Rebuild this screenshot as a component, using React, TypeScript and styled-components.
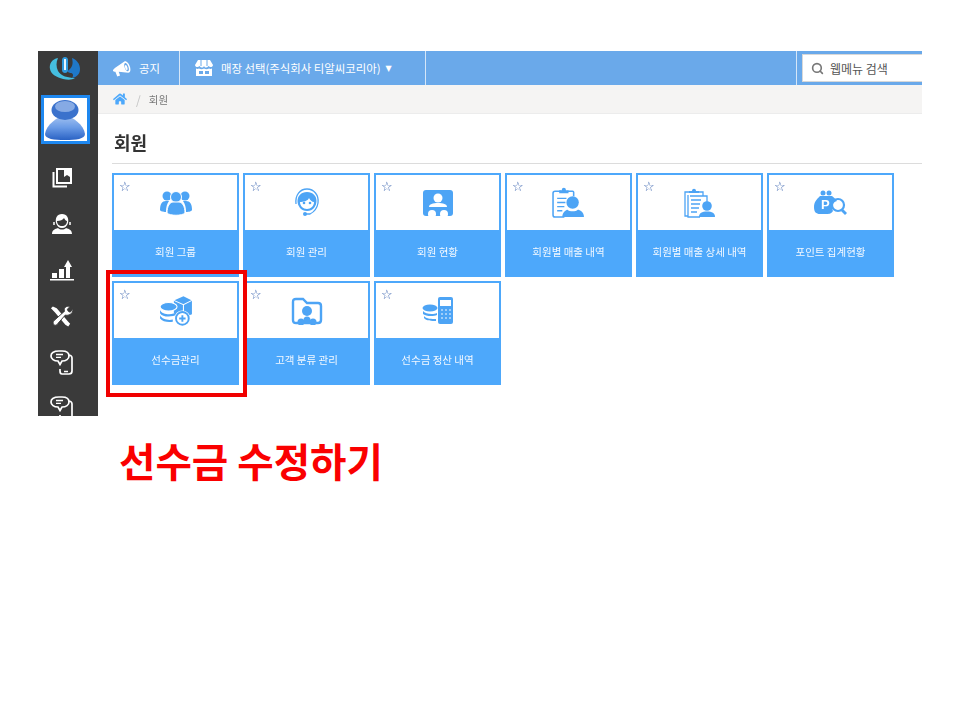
import React from "react";
import styled, { createGlobalStyle } from "styled-components";
import { FaHome } from "react-icons/fa";
import { FiSearch } from "react-icons/fi";

const Global = createGlobalStyle`
  html, body { margin: 0; padding: 0; background: #fff; }
  body { font-family: "Noto Sans CJK KR", "Noto Sans", sans-serif; }
`;

const Page = styled.div`
  position: relative;
  width: 960px;
  height: 720px;
  padding: 51px 38px 0;
  box-sizing: border-box;
  overflow: hidden;
`;
const Frame = styled.div`
  display: flex;
  width: 884px;
  height: 365px;
  overflow: hidden;
  filter: blur(0.3px);
`;
const Sidebar = styled.aside`
  flex: 0 0 60px;
  background: #3a3a3a;
  display: flex;
  flex-direction: column;
  align-items: center;
  overflow: hidden;
`;
const LogoBox = styled.div`
  flex: 0 0 34px;
  margin-right: 6px;
  display: flex;
  align-items: center;
  justify-content: center;
`;
const Avatar = styled.div`
  flex: 0 0 auto;
  margin-top: 10px;
  margin-right: 6px;
  width: 43px;
  height: 43px;
  border: 3px solid #1e88f0;
  background: #fff;
  display: flex;
  align-items: center;
  justify-content: center;
`;
const SideIcons = styled.div`
  flex: 0 0 auto;
  margin-top: 22px;
  margin-right: 12px;
  display: flex;
  flex-direction: column;
  align-items: center;
  gap: 22px;
  color: #fff;
`;
const SideIcon = styled.div`
  width: 24px;
  height: 24px;
  display: flex;
  align-items: center;
  justify-content: center;
`;
const Main = styled.main`
  flex: 1;
  min-width: 0;
  display: flex;
  flex-direction: column;
`;
const TopBar = styled.div`
  flex: 0 0 34px;
  background: #6aa9ea;
  display: flex;
  align-items: stretch;
  color: #fff;
  font-size: 11.4px;
  white-space: nowrap;
`;
const TopItem = styled.div<{ $w: number }>`
  width: ${(p) => p.$w}px;
  box-sizing: border-box;
  border-right: 1px solid #d5e6f8;
  display: flex;
  align-items: center;
  padding-left: 15px;
  gap: 8px;
`;
const Caret = styled.span`
  font-family: "DejaVu Sans", sans-serif;
  font-size: 8px;
  margin-left: -3px;
`;
const Spacer = styled.div`
  flex: 1;
`;
const SearchWrap = styled.div`
  width: 126px;
  box-sizing: border-box;
  border-left: 1px solid #d5e6f8;
  padding: 3px 0 3px 5px;
  display: flex;
`;
const SearchBox = styled.div`
  flex: 1;
  background: #fff;
  border: 1px solid #d8d8d8;
  border-right: 0;
  display: flex;
  align-items: center;
  padding-left: 8px;
  gap: 6px;
  color: #555;
  font-size: 12px;
`;
const Crumbs = styled.div`
  flex: 0 0 29px;
  box-sizing: border-box;
  background: #f5f4f3;
  border-bottom: 1px solid #ececec;
  display: flex;
  align-items: center;
  padding-left: 15px;
  font-size: 10.5px;
  color: #777;
`;
const Slash = styled.span`
  color: #c4c4c4;
  margin: 0 8px 0 9px;
  font-size: 12px;
`;
const Content = styled.div`
  padding: 0 0 0 14px;
`;
const Title = styled.h1`
  margin: 0;
  padding: 15px 0 0 2px;
  height: 34px;
  font-size: 18px;
  line-height: 26px;
  font-weight: 700;
  color: #333;
  border-bottom: 1px solid #dcdcdc;
`;
const Grid = styled.div`
  margin-top: 9px;
  display: grid;
  grid-template-columns: repeat(6, 127px);
  grid-auto-rows: 104px;
  gap: 4px;
`;
const Card = styled.div`
  border: 2px solid #4da8fb;
  background: #4da8fb;
  display: flex;
  flex-direction: column;
  box-sizing: border-box;
`;
const CardTop = styled.div`
  position: relative;
  height: 55px;
  background: #fff;
  display: flex;
  align-items: center;
  justify-content: center;
  color: #4da4f5;
`;
const Star = styled.span`
  position: absolute;
  left: 5px;
  top: 4px;
  font-family: "DejaVu Sans", sans-serif;
  font-size: 13px;
  line-height: 15px;
  color: #3d66b0;
`;
const CardLabel = styled.div`
  flex: 1;
  display: flex;
  align-items: center;
  justify-content: center;
  color: #f2f8ff;
  font-size: 10.5px;
  padding-bottom: 2px;
`;
const Highlight = styled.div`
  position: absolute;
  left: 106px;
  top: 270px;
  width: 141px;
  height: 127px;
  box-sizing: border-box;
  border: 4px solid #f00000;
`;
const Caption = styled.div`
  margin: 15px 0 0 81px;
  color: #fa0000;
  font-size: 39.6px;
  line-height: 58px;
  font-weight: 700;
`;

const Logo = () => (
  <svg width="32" height="25" viewBox="0 0 32 25">
    <path d="M9 2C3 3 0 8 1 13c1 6 7 8 13 10 5 1 9 1 12-1-7 0-14-2-17-7C7 11 7 6 9 2z" fill="#45bfe0" />
    <path d="M23 2c5 2 8 6 8 11 0 5-3 8-8 9 2-3 1-5-2-5-3-1-3-2 0-4 3-3 3-7 2-11z" fill="#1f78c8" />
    <path d="M13 4c0-4 6-4 6 0v10c0 4-6 4-6 0z" fill="#2f9be0" />
    <rect x="15" y="3" width="2" height="11" fill="#eaf7fd" />
  </svg>
);
const AvatarFig = () => (
  <svg width="42" height="43" viewBox="0 0 42 43">
    <defs>
      <linearGradient id="av" x1="0" x2="0" y1="0" y2="1">
        <stop offset="0" stopColor="#a8c6f2" />
        <stop offset="0.5" stopColor="#6a9be6" />
        <stop offset="1" stopColor="#2a62c4" />
      </linearGradient>
    </defs>
    <path d="M21 17C13 19 2 27 1 36c0 5 9 6 20 6s20-1 20-6c-1-9-12-17-20-19z" fill="url(#av)" />
    <ellipse cx="21" cy="12" rx="13.500" ry="10" fill="#3b72cc" />
    <ellipse cx="21" cy="8.500" rx="10" ry="5.500" fill="#86aae4" />
  </svg>
);

const Stroke = { fill: "none", stroke: "currentColor", strokeWidth: 2 };
const BookIcon = () => (
  <svg width="20" height="20" viewBox="0 0 20 20">
    <path d="M1.500 4v14.500H15" {...Stroke} />
    <path d="M5 1h14v14H5z" {...Stroke} />
    <path d="M12 1h6v8l-3-2-3 2z" fill="#fff" />
  </svg>
);
const AgentIcon = () => (
  <svg width="22" height="22" viewBox="0 0 22 22">
    <path d="M11 1c-5 0-7 4-6 9 1 3 3 5 6 5s5-2 6-5c1-5-1-9-6-9z" fill="#fff" />
    <path d="M6 8c3 0 6-1 7-3 1 2 2 3 3 3 0 3-2 5-5 5S6 11 6 8z" fill="#3a3a3a" />
    <path d="M1 21c0-4 3-5 6-6 2 2 6 2 8 0 3 1 6 2 6 6z" fill="#fff" />
    <path d="M3 9v3M19 9v3" stroke="#fff" strokeWidth="1.500" />
  </svg>
);
const ChartIcon = () => (
  <svg width="24" height="22" viewBox="0 0 24 22" fill="#fff">
    <rect x="2" y="14" width="5" height="5" />
    <rect x="9" y="10" width="5" height="9" />
    <path d="M16 19V8h-2l4-7 4 7h-2v11z" />
    <rect y="20" width="24" height="1.500" />
  </svg>
);
const ToolsIcon = () => (
  <svg width="25" height="22" viewBox="0 0 25 22" fill="#fff">
    <path d="M1 3l2-2 4 2 12 14 2 2-2 3-3-2L5 7z" />
    <path d="M24 4l-3 3-2-1-1-2 3-3c-3-1-7 1-6 4 0 1 0 2-1 2L4 16c-1 1-1 3 0 4s3 1 4-1l8-9c3 1 8-1 8-6z" stroke="#3a3a3a" strokeWidth="1" />
  </svg>
);
const ChatPhoneIcon = () => (
  <svg width="24" height="25" viewBox="0 0 24 25">
    <path d="M18 5c3 0 4 1 4 3v13c0 2-1 3-3 3h-7c-1 0-2-1-2-3v-2" fill="none" stroke="#fff" strokeWidth="1.700" />
    <path d="M9 1h3c5 0 7 2 7 5s-3 5-7 5l-2 3.500L8 11c-4 0-7-2-7-5s3-5 8-5z" fill="#3a3a3a" stroke="#fff" strokeWidth="1.700" />
    <path d="M6 4.500h7M6 7.300h5" stroke="#fff" strokeWidth="1.300" />
    <path d="M14 21.500h4" stroke="#fff" strokeWidth="1.500" />
  </svg>
);

const Megaphone = () => (
  <svg width="18" height="17" viewBox="0 0 19 17" fill="#fff">
    <path d="M0 10l2-2L12 1c2-1 5 2 6 6 1 4 0 6-2 6L6 12l1.500 4-3 1-2-5c-2 0-3-1-2.500-2z" />
    <ellipse cx="14.300" cy="7" rx="2" ry="4.500" transform="rotate(-18 14.300 7)" fill="#6aa9ea" />
    <ellipse cx="14" cy="7.500" rx="1.200" ry="2.800" transform="rotate(-18 14 7.500)" fill="#fff" />
  </svg>
);
const StoreIcon = () => (
  <svg width="18" height="16" viewBox="0 0 18 16" fill="#fff">
    <path d="M3 0h12l3 5c0 2-3 3-4.500 1C12 8 10 8 9 6 8 8 6 8 4.500 6 3 8 0 7 0 5z" />
    <path d="M1 8.500c1 .5 2 .5 3 0 1.500 1 3.500 1 5 0 1.500 1 3.500 1 5 0 1 .5 2 .5 3 0V16H1z" />
    <rect x="4" y="11" width="4" height="3" fill="#6aa9ea" />
    <rect x="10" y="11" width="4" height="3" fill="#6aa9ea" />
    <path d="M6 0v6M12 0v6" stroke="#6aa9ea" strokeWidth="1" />
  </svg>
);

const UsersBlue = () => (
  <svg width="32" height="28" viewBox="0 0 32 28" fill="currentColor">
    <circle cx="7" cy="7" r="4.500" />
    <circle cx="25" cy="7" r="4.500" />
    <path d="M0 21c0-6 2-9 6-9h3c-2 3-3 6-3 11-3 0-6-1-6-2zM32 21c0-6-2-9-6-9h-3c2 3 3 6 3 11 3 0 6-1 6-2z" />
    <circle cx="16" cy="8" r="5.500" stroke="#fff" strokeWidth="1" />
    <path d="M7 24c0-7 3-11 6-11h6c3 0 6 4 6 11-3 3-15 3-18 0z" stroke="#fff" strokeWidth="1" />
  </svg>
);
const AgentBlue = () => (
  <svg width="26" height="29" viewBox="0 0 26 29">
    <path d="M2 16C1 7 6 1 13 1s12 6 11 14c-1 6-4 9-8 11h-4" fill="none" stroke="currentColor" strokeWidth="1.300" />
    <path d="M13 4C7 4 3.500 8 3.500 13S7 23 13 23s9.500-5 9.500-10S19 4 13 4z" fill="currentColor" />
    <path d="M6 14c3 0 8-1 9-4 1 2 3 4 5 4 0 4-3 7-7 7s-7-3-7-7z" fill="#fff" />
    <circle cx="10" cy="15" r="1.300" fill="currentColor" />
    <circle cx="16" cy="15" r="1.300" fill="currentColor" />
    <circle cx="11" cy="26" r="2" fill="currentColor" />
  </svg>
);
const ContactBlue = () => (
  <svg width="30" height="26" viewBox="0 0 30 26">
    <rect width="30" height="26" rx="3" fill="currentColor" />
    <circle cx="15" cy="8" r="4.500" fill="#fff" />
    <path d="M6 17c0-3 4-4 9-4s9 1 9 4z" fill="#fff" />
    <circle cx="9" cy="24" r="4" fill="#fff" />
    <circle cx="21" cy="24" r="4" fill="#fff" />
  </svg>
);
const ClipUser = () => (
  <svg width="33" height="31" viewBox="0 0 32 30">
    <path d="M9 4H3c-1 0-2 1-2 2v21c0 1 1 2 2 2h9" fill="none" stroke="currentColor" strokeWidth="1.500" />
    <path d="M15 4h5c1 0 1 1 1 1v4" fill="none" stroke="currentColor" strokeWidth="1.500" />
    <path d="M7 6V3h2.500c0-3 4-3 4 0H16v3z" fill="currentColor" />
    <path d="M5 11h9M5 15h8M5 19h7M5 23h5" stroke="currentColor" strokeWidth="1.300" />
    <circle cx="20" cy="15" r="6" fill="currentColor" />
    <path d="M10 29c0-5 4-7 5-7 2 2 8 2 10 0 2 0 6 2 6 7z" fill="currentColor" />
  </svg>
);
const ClipUser2 = () => (
  <svg width="32" height="30" viewBox="0 0 32 30">
    <path d="M7 4H1v24h3" fill="none" stroke="currentColor" strokeWidth="1.300" />
    <path d="M4 7v22h12" fill="none" stroke="currentColor" strokeWidth="1.300" />
    <path d="M5 5V3h3c0-3 4-3 4 0h3v2z" fill="currentColor" />
    <path d="M15 4h4v4M6 8h17v6" fill="none" stroke="currentColor" strokeWidth="1.300" />
    <path d="M7 12h10M7 16h9M7 20h8M7 24h6" stroke="currentColor" strokeWidth="1.300" />
    <circle cx="23" cy="18" r="4.800" fill="currentColor" />
    <path d="M15 29c0-4 3-5.500 8-5.500s8 1.500 8 5.500z" fill="currentColor" />
  </svg>
);
const PurseIcon = () => (
  <svg width="34" height="26" viewBox="0 0 34 26">
    <circle cx="9" cy="3" r="2.500" fill="currentColor" />
    <circle cx="15" cy="3" r="2.500" fill="currentColor" />
    <path d="M6 6h12c2 2 4 3 5 5-4 1-6 5-4 10-2 3-4 3-7 3H6c-4 0-6-2-6-7 0-5 3-8 6-11z" fill="currentColor" />
    <text x="7" y="19" fontSize="13" fontWeight="700" fill="#fff" fontFamily="Liberation Sans, sans-serif">P</text>
    <circle cx="24" cy="15" r="6" fill="none" stroke="currentColor" strokeWidth="2.200" />
    <path d="M28 20l4 4" stroke="currentColor" strokeWidth="2.800" />
  </svg>
);
const Coins = () => (
  <svg width="34" height="32" viewBox="0 0 32 30">
    <path d="M14 5l9-4 8 4v13l-8 3-9-4z" fill="currentColor" />
    <path d="M14 5l9 4 8-4M23 9v12" fill="none" stroke="#fff" strokeWidth="1" />
    <ellipse cx="9" cy="11" rx="8" ry="4" fill="currentColor" stroke="#fff" />
    <path d="M1 14c2 5 12 5 16 2v2c-4 3-14 3-16-1zM1 19c2 4 8 5 12 4v2c-4 1-10 0-12-3z" fill="currentColor" />
    <circle cx="22" cy="22" r="7.500" fill="#fff" />
    <circle cx="22" cy="22" r="6" fill="none" stroke="currentColor" strokeWidth="1.800" />
    <path d="M19 22h6M22 19v6" stroke="currentColor" strokeWidth="1.800" />
  </svg>
);
const FolderUser = () => (
  <svg width="32" height="28" viewBox="0 0 32 28">
    <path d="M2 5c0-2 1-3 3-3h7l4 4h11c2 0 3 1 3 3v14c0 2-1 3-3 3H5c-2 0-3-1-3-3z" fill="none" stroke="currentColor" strokeWidth="2.400" />
    <circle cx="16" cy="14" r="5" fill="currentColor" />
    <circle cx="10" cy="25" r="3.500" fill="currentColor" />
    <circle cx="16" cy="23" r="3.500" fill="currentColor" />
    <circle cx="22" cy="25" r="3.500" fill="currentColor" />
  </svg>
);
const CoinCalc = () => (
  <svg width="32" height="27" viewBox="0 0 32 27">
    <ellipse cx="8" cy="11" rx="7.500" ry="3.500" fill="currentColor" />
    <path d="M1 14c2 3 10 4 14 2v2c-4 2-12 1-14-1zM2 19c2 3 8 3 12 3v2c-4 0-10 0-12-3z" fill="currentColor" />
    <rect x="16" y="0" width="15" height="27" rx="2" fill="currentColor" />
    <rect x="18" y="3" width="11" height="6" fill="#fff" />
    <path d="M19 13h2M23 13h2M27 13h2M19 17h2M23 17h2M27 17h2M19 21h2M23 21h2M27 21h2" stroke="#bcdcfb" strokeWidth="1.500" />
  </svg>
);

const cards = [
  ["회원 그룹", <UsersBlue key="a" />],
  ["회원 관리", <AgentBlue key="b" />],
  ["회원 현황", <ContactBlue key="c" />],
  ["회원별 매출 내역", <ClipUser key="d" />],
  ["회원별 매출 상세 내역", <ClipUser2 key="e" />],
  ["포인트 집계현황", <PurseIcon key="f" />],
  ["선수금관리", <Coins key="g" />],
  ["고객 분류 관리", <FolderUser key="h" />],
  ["선수금 정산 내역", <CoinCalc key="i" />],
] as const;

export default function App() {
  return (
    <Page>
      <Global />
      <Frame>
        <Sidebar>
          <LogoBox><Logo /></LogoBox>
          <Avatar><AvatarFig /></Avatar>
          <SideIcons>
            <SideIcon><BookIcon /></SideIcon>
            <SideIcon><AgentIcon /></SideIcon>
            <SideIcon><ChartIcon /></SideIcon>
            <SideIcon><ToolsIcon /></SideIcon>
            <SideIcon><ChatPhoneIcon /></SideIcon>
            <SideIcon><ChatPhoneIcon /></SideIcon>
          </SideIcons>
        </Sidebar>
        <Main>
          <TopBar>
            <TopItem $w={82}><Megaphone /> 공지</TopItem>
            <TopItem $w={246}><StoreIcon /> 매장 선택(주식회사 티알씨코리아) <Caret>▼</Caret></TopItem>
            <Spacer />
            <SearchWrap>
              <SearchBox><FiSearch size={13} color="#777" strokeWidth={3} /> 웹메뉴 검색</SearchBox>
            </SearchWrap>
          </TopBar>
          <Crumbs>
            <FaHome size={14} color="#4da8fb" />
            <Slash>/</Slash>
            회원
          </Crumbs>
          <Content>
            <Title>회원</Title>
            <Grid>
              {cards.map(([label, icon]) => (
                <Card key={label}>
                  <CardTop>
                    <Star>☆</Star>
                    {icon}
                  </CardTop>
                  <CardLabel>{label}</CardLabel>
                </Card>
              ))}
            </Grid>
          </Content>
        </Main>
      </Frame>
      <Highlight />
      <Caption>선수금 수정하기</Caption>
    </Page>
  );
}
